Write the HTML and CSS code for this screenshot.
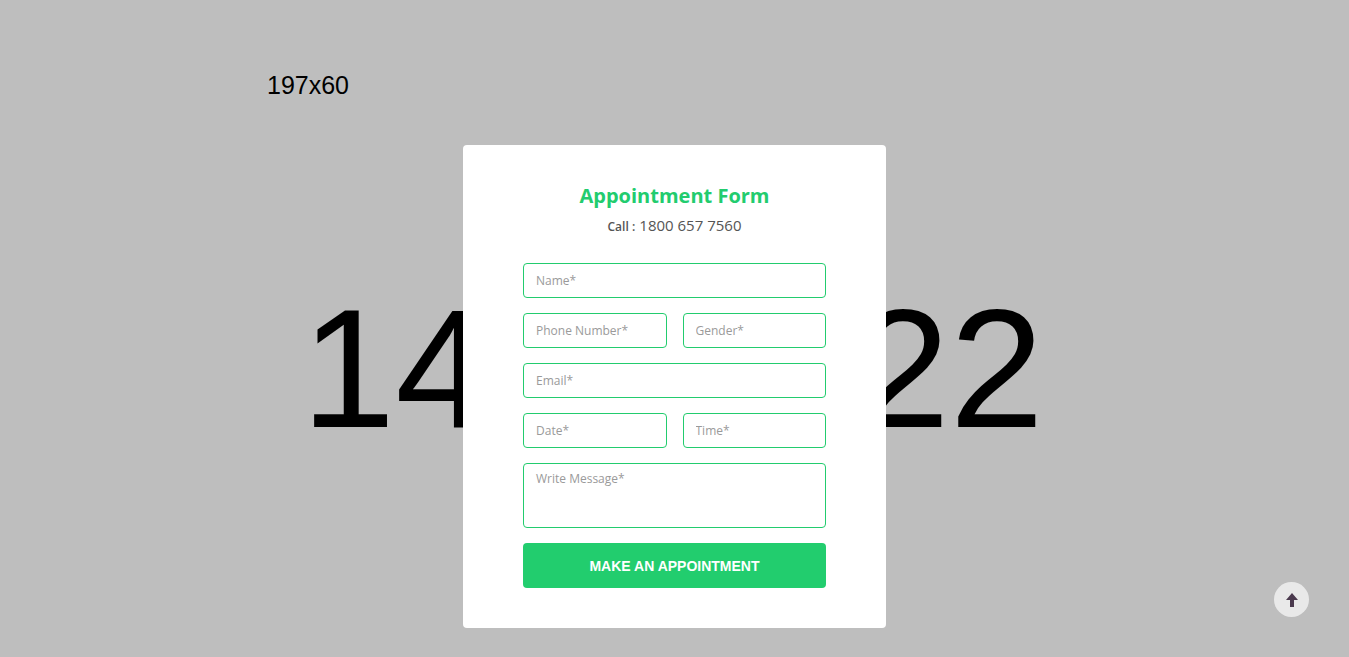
FILE: index.html
```html
<!DOCTYPE html>
<html>
<head>
<meta charset="utf-8">
<link rel="stylesheet" href="styles.css">
</head>
<body>
<div class="page">
  <div class="logo">197x60</div>
  <div class="hero">1440x522</div>
</div>
<div class="overlay">
  <div class="modal">
    <h2 class="title">Appointment Form</h2>
    <p class="call"><span class="call-label">Call :</span> <span class="call-num">1800 657 7560</span></p>
    <form class="form">
      <input class="field" placeholder="Name*">
      <div class="row">
        <input class="field" placeholder="Phone Number*">
        <input class="field" placeholder="Gender*">
      </div>
      <input class="field" placeholder="Email*">
      <div class="row">
        <input class="field" placeholder="Date*">
        <input class="field" placeholder="Time*">
      </div>
      <textarea class="field area" placeholder="Write Message*"></textarea>
      <button type="button" class="btn">MAKE AN APPOINTMENT</button>
    </form>
  </div>
</div>
<div class="totop">
  <svg width="12" height="14" viewBox="0 0 12 14"><path d="M6 0 L12 7 L8 7 L8 14 L4 14 L4 7 L0 7 Z" fill="#4b3a4e"/></svg>
</div>
</body>
</html>
```
FILE: styles.css
```css
html, body {
  margin: 0;
  padding: 0;
  height: 100%;
  background: #bebebe;
  overflow: hidden;
}
.page {
  font-family: "Liberation Sans", Arial, sans-serif;
  color: #000;
}
.logo {
  font-size: 25px;
  line-height: 30px;
  padding: 70px 0 0 267px;
}
.hero {
  font-size: 169px;
  line-height: 169px;
  text-align: center;
  margin-top: 184px;
  padding-right: 4px;
}
.overlay {
  position: fixed;
  inset: 0;
  display: flex;
  justify-content: center;
  align-items: flex-start;
  padding-top: 145px;
}
.modal {
  width: 303px;
  background: #fff;
  border-radius: 4px;
  padding: 38px 60px 40px;
  font-family: "Open Sans", sans-serif;
  text-align: center;
}
.title {
  margin: 0;
  font-size: 20px;
  line-height: 26px;
  font-weight: 700;
  color: #22cc6e;
}
.call {
  margin: 6px 0 0;
  color: #555;
  line-height: 20px;
}
.call-label { font-size: 12px; font-weight: 600; }
.call-num { font-size: 15px; font-weight: 400; }
.form {
  margin-top: 26px;
  display: flex;
  flex-direction: column;
  gap: 15px;
}
.row {
  display: flex;
  gap: 16px;
}
.row .field { flex: 1; min-width: 0; }
.field {
  box-sizing: border-box;
  height: 35px;
  width: 100%;
  border: 1px solid #22cc6e;
  border-radius: 4px;
  padding: 0 12px;
  font-family: "Open Sans", sans-serif;
  font-size: 12px;
  color: #333;
  outline: none;
  background: #fff;
}
.field::placeholder { color: #9a9a9a; }
.area {
  height: 65px;
  padding-top: 6px;
  resize: none;
  display: block;
}
.btn {
  height: 45px;
  border: none;
  border-radius: 4px;
  background: #22cd6e;
  color: #fff;
  font-family: "Liberation Sans", Arial, sans-serif;
  font-weight: 700;
  font-size: 14px;
  cursor: pointer;
}
.totop {
  position: fixed;
  left: 1274px;
  top: 582px;
  width: 35px;
  height: 35px;
  border-radius: 50%;
  background: #e9e9e9;
  display: flex;
  align-items: center;
  justify-content: center;
}
```
